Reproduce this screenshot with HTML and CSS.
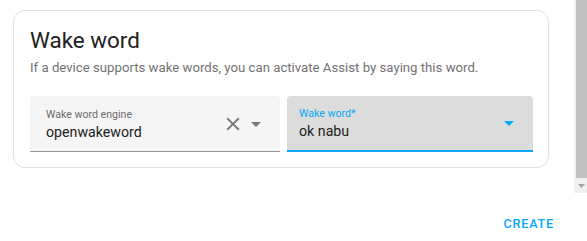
FILE: index.html
```html
<!DOCTYPE html>
<html>
<head>
<meta charset="utf-8">
<link rel="stylesheet" href="styles.css">
</head>
<body>
<div class="dialog">
  <div class="scroll-area">
    <div class="content">
      <div class="card">
        <h2 class="title">Wake word</h2>
        <p class="desc">If a device supports wake words, you can activate Assist by saying this word.</p>
        <div class="fields">
          <div class="field">
            <div class="field-text">
              <span class="label">Wake word engine</span>
              <span class="value">openwakeword</span>
            </div>
            <svg class="icon clear" viewBox="0 0 24 24"><path d="M19,6.41L17.59,5L12,10.59L6.41,5L5,6.41L10.59,12L5,17.59L6.41,19L12,13.41L17.59,19L19,17.59L13.41,12L19,6.41Z"/></svg>
            <svg class="icon arrow" viewBox="0 0 24 24"><path d="M7,10L12,15L17,10H7Z"/></svg>
          </div>
          <div class="field focused">
            <div class="field-text">
              <span class="label">Wake word*</span>
              <span class="value">ok nabu</span>
            </div>
            <svg class="icon arrow" viewBox="0 0 24 24"><path d="M7,10L12,15L17,10H7Z"/></svg>
          </div>
        </div>
      </div>
    </div>
    <div class="scrollbar">
      <div class="thumb"></div>
      <div class="down"><svg viewBox="0 0 7 4"><path d="M0,0H7L3.5,4Z"/></svg></div>
    </div>
  </div>
  <div class="actions">
    <button class="btn">Create</button>
  </div>
</div>
</body>
</html>
```
FILE: styles.css
```css
* { box-sizing: border-box; }
html, body { margin: 0; padding: 0; }
body {
  width: 587px;
  height: 241px;
  overflow: hidden;
  background: #ffffff;
  font-family: Roboto, "Noto Sans", sans-serif;
  color: #212121;
}
.dialog {
  display: flex;
  flex-direction: column;
  height: 241px;
}
.scroll-area {
  display: flex;
  height: 193px;
}
.content {
  flex: 1;
  padding: 10px 25px 0 13px;
}
.card {
  border: 1px solid #e0e0e0;
  border-radius: 12px;
  padding: 15px 15px 15px 16px;
}
.title {
  margin: 0;
  font-size: 22.4px;
  font-weight: 400;
  line-height: 28px;
  color: #212121;
}
.desc {
  margin: 4px 0 0 0;
  font-size: 13.2px;
  line-height: 20px;
  color: #727272;
}
.fields {
  display: flex;
  gap: 7px;
  margin-top: 18px;
}
.field {
  flex: 1 1 0;
  min-width: 0;
  height: 56px;
  display: flex;
  align-items: center;
  background: #f5f5f5;
  border-radius: 4px 4px 0 0;
  border-bottom: 1px solid #949494;
  padding: 0 12px 0 16px;
}
.field.focused {
  background: #dcdcdc;
  border-bottom: 2px solid #03a9f4;
  padding-left: 12px;
}
.field-text {
  flex: 1;
  display: flex;
  flex-direction: column;
  padding-top: 2px;
}
.label {
  font-size: 10.6px;
  line-height: 14px;
  color: #6b6b6b;
}
.focused .label { color: #03a9f4; }
.value {
  font-size: 14.2px;
  line-height: 20px;
  color: #212121;
}
.icon {
  flex: none;
  fill: #757575;
}
.clear {
  width: 22px;
  height: 22px;
}
.arrow {
  width: 24px;
  height: 24px;
}
.focused .arrow { fill: #03a9f4; }
.scrollbar {
  width: 13px;
  flex: none;
  background: #f1f1f1;
  display: flex;
  flex-direction: column;
  padding-left: 2px;
}
.thumb {
  height: 178px;
  background: #c1c1c1;
}
.down {
  height: 15px;
  display: flex;
  align-items: center;
  justify-content: center;
  padding-right: 1px;
}
.down svg {
  width: 7px;
  height: 4px;
  fill: #a3a3a3;
}
.actions {
  flex: 1;
  display: flex;
  justify-content: flex-end;
  align-items: flex-start;
  padding: 12px 25px 0 0;
}
.btn {
  border: none;
  background: none;
  padding: 0 8px;
  height: 36px;
  font-family: Roboto, "Noto Sans", sans-serif;
  font-size: 12.6px;
  font-weight: 500;
  letter-spacing: 0.8px;
  text-transform: uppercase;
  color: #03a9f4;
}
```
